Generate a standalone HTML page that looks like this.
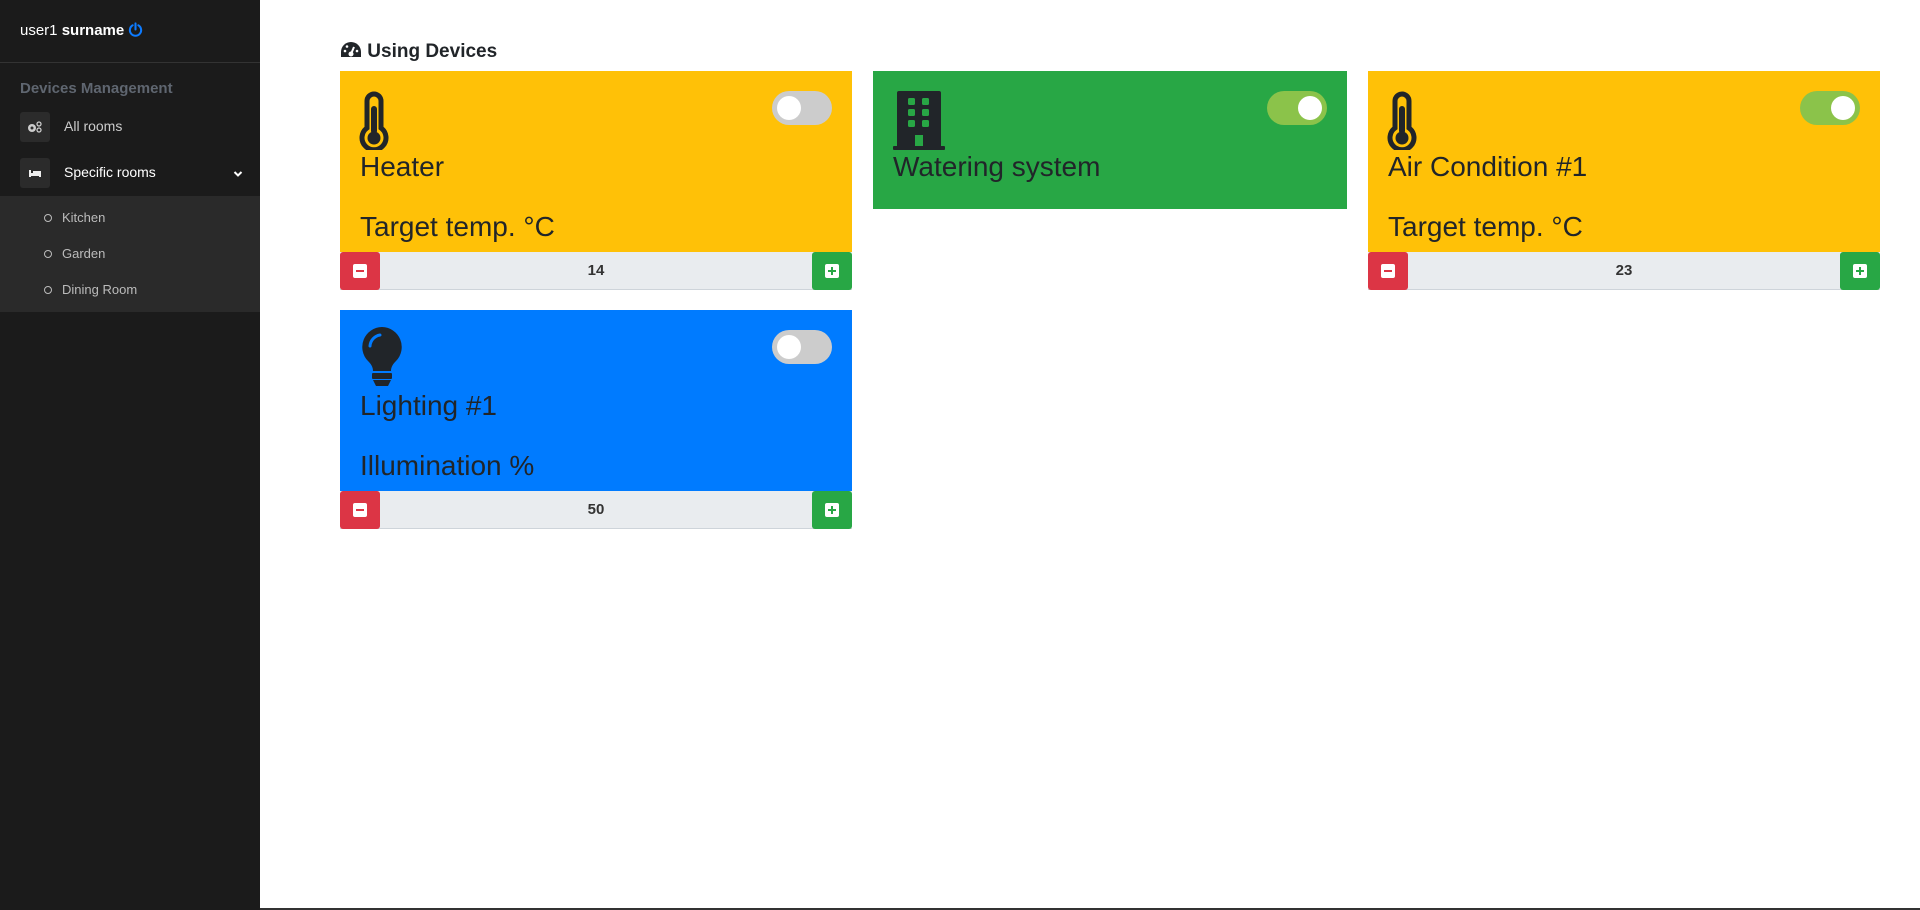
<!DOCTYPE html>
<html><head><meta charset="utf-8"><style>
*{box-sizing:border-box;margin:0;padding:0}
body{width:1920px;height:910px;overflow:hidden;background:#fff;font-family:"Liberation Sans",Arial,sans-serif;position:relative}
.sb{position:absolute;left:0;top:0;width:260px;height:910px;background:#1b1b1b}
.abs{position:absolute}
.card{position:absolute;color:#212529}
.tog{position:absolute;width:60px;height:34px;border-radius:17px;background:#ccc}
.tog i{position:absolute;top:5px;left:5px;width:24px;height:24px;border-radius:50%;background:#fff}
.tog.on{background:#8bc34a}.tog.on i{left:31px}
.name{position:absolute;left:20px;font-size:28px;line-height:32px}
.bar{position:absolute;left:0;right:0;top:181px;height:38px;background:#e9ecef;border-bottom:1px solid #ced4da;text-align:center;font-weight:bold;font-size:15px;line-height:38px;color:#333}
.bm,.bp{position:absolute;top:0;width:40px;height:38px;border-radius:3px}
.bm{left:0;background:#dc3545}.bp{right:0;background:#28a745}
.bm:after,.bp:after{content:"";position:absolute;left:13px;top:12px;width:14px;height:14px;background:#fff;border-radius:2px}
.bm b,.bp b{position:absolute;z-index:2;left:16px;top:18px;width:8px;height:2px;background:#dc3545}
.bp b{background:#28a745}
.bp s{position:absolute;z-index:2;left:19px;top:15px;width:2px;height:8px;background:#28a745}
</style></head><body>
<div class="sb">
 <div class="abs" style="left:20px;top:22px;font-size:15px;color:#fff">user1 <b>surname</b>
  <svg width="15" height="15" viewBox="0 0 16 16" style="vertical-align:-2px"><path d="M5 3.5A6 6 0 1 0 11 3.5" fill="none" stroke="#0d7bff" stroke-width="2.2" stroke-linecap="round"/><path d="M8 1.5V8" stroke="#0d7bff" stroke-width="2.2" stroke-linecap="round"/></svg></div>
 <div class="abs" style="left:0;top:62px;width:260px;height:1px;background:#333"></div>
 <div class="abs" style="left:20px;top:80px;font-size:15px;font-weight:bold;color:#5f6670">Devices Management</div>
 <div class="abs" style="left:20px;top:112px;width:30px;height:30px;background:#2b2b2b;border-radius:3px"><svg width="30" height="30" viewBox="0 0 30 30"><circle cx="12" cy="16" r="4" fill="#ccc"/><circle cx="12" cy="16" r="1.5" fill="#2b2b2b"/><circle cx="19" cy="12" r="2" fill="none" stroke="#ccc" stroke-width="1.3"/><circle cx="19" cy="18" r="2" fill="none" stroke="#ccc" stroke-width="1.3"/></svg></div>
 <div class="abs" style="left:64px;top:118px;font-size:14px;color:#ccc">All rooms</div>
 <div class="abs" style="left:20px;top:158px;width:30px;height:30px;background:#2b2b2b;border-radius:3px"><svg width="30" height="30" viewBox="0 0 30 30"><rect x="9" y="12" width="2" height="7" fill="#eee"/><rect x="9" y="15" width="12" height="3" fill="#eee"/><rect x="13" y="13" width="8" height="3" fill="#eee"/><rect x="19" y="15" width="2" height="4" fill="#eee"/></svg></div>
 <div class="abs" style="left:64px;top:164px;font-size:14px;color:#fff">Specific rooms</div>
 <svg class="abs" style="left:233px;top:170px" width="10" height="8" viewBox="0 0 10 8"><path d="M1.5 2l3.5 3.5L8.5 2" fill="none" stroke="#fff" stroke-width="2"/></svg>
 <div class="abs" style="left:0;top:196px;width:260px;height:116px;background:#2a2a2a"></div>
 <div class="abs" style="left:44px;top:210px;font-size:13px;color:#bbb;line-height:16px">
  <div style="height:36px"><span style="display:inline-block;width:8px;height:8px;border:1.3px solid #bbb;border-radius:50%;margin-right:10px"></span>Kitchen</div>
  <div style="height:36px"><span style="display:inline-block;width:8px;height:8px;border:1.3px solid #bbb;border-radius:50%;margin-right:10px"></span>Garden</div>
  <div style="height:36px"><span style="display:inline-block;width:8px;height:8px;border:1.3px solid #bbb;border-radius:50%;margin-right:10px"></span>Dining Room</div>
 </div>
</div>
<div class="abs" style="left:260px;top:908px;width:1660px;height:2px;background:#333"></div>

<div class="abs" style="left:340px;top:41px;font-size:19px;font-weight:bold;color:#212529">
<svg width="22" height="18" viewBox="0 0 22 18" style="vertical-align:-2px"><path d="M11 1A10 10 0 0 0 1 11v5h20v-5A10 10 0 0 0 11 1z" fill="#212529"/><circle cx="11" cy="13" r="2.5" fill="#fff"/><path d="M11 13l3-7" stroke="#fff" stroke-width="2"/><circle cx="5" cy="10" r="1.3" fill="#fff"/><circle cx="7" cy="5.5" r="1.3" fill="#fff"/><circle cx="17" cy="10" r="1.3" fill="#fff"/></svg> Using Devices</div>

<!-- Heater -->
<div class="card" style="left:340px;top:71px;width:512px;height:219px;background:#ffc107">
 <svg class="abs" style="left:18px;top:20px" width="32" height="59" viewBox="0 0 32 59"><path d="M16 3a7 7 0 0 0-7 7v27a12 12 0 1 0 14 0V10a7 7 0 0 0-7-7z" fill="none" stroke="#212529" stroke-width="5"/><rect x="13" y="15" width="6" height="28" rx="3" fill="#212529"/><circle cx="16" cy="47" r="6.5" fill="#212529"/></svg>
 <div class="tog" style="left:432px;top:20px"><i></i></div>
 <div class="name" style="top:80px">Heater</div>
 <div class="name" style="top:140px">Target temp. °C</div>
 <div class="bar"><div class="bm"><b></b></div>14<div class="bp"><b></b><s></s></div></div>
</div>
<!-- Watering -->
<div class="card" style="left:873px;top:71px;width:474px;height:138px;background:#28a745">
 <svg class="abs" style="left:20px;top:20px" width="52" height="59" viewBox="0 0 52 59"><rect x="4" y="0" width="44" height="57" rx="2" fill="#212529"/><rect x="0" y="55" width="52" height="4" rx="1" fill="#212529"/><g fill="#28a745"><rect x="15" y="7" width="7" height="7" rx="1.5"/><rect x="29" y="7" width="7" height="7" rx="1.5"/><rect x="15" y="18" width="7" height="7" rx="1.5"/><rect x="29" y="18" width="7" height="7" rx="1.5"/><rect x="15" y="29" width="7" height="7" rx="1.5"/><rect x="29" y="29" width="7" height="7" rx="1.5"/><rect x="22" y="44" width="8" height="11"/></g></svg>
 <div class="tog on" style="left:394px;top:20px"><i></i></div>
 <div class="name" style="top:80px">Watering system</div>
</div>
<!-- AC -->
<div class="card" style="left:1368px;top:71px;width:512px;height:219px;background:#ffc107">
 <svg class="abs" style="left:18px;top:20px" width="32" height="59" viewBox="0 0 32 59"><path d="M16 3a7 7 0 0 0-7 7v27a12 12 0 1 0 14 0V10a7 7 0 0 0-7-7z" fill="none" stroke="#212529" stroke-width="5"/><rect x="13" y="15" width="6" height="28" rx="3" fill="#212529"/><circle cx="16" cy="47" r="6.5" fill="#212529"/></svg>
 <div class="tog on" style="left:432px;top:20px"><i></i></div>
 <div class="name" style="top:80px">Air Condition #1</div>
 <div class="name" style="top:140px">Target temp. °C</div>
 <div class="bar"><div class="bm"><b></b></div>23<div class="bp"><b></b><s></s></div></div>
</div>
<!-- Lighting -->
<div class="card" style="left:340px;top:310px;width:512px;height:219px;background:#007bff">
 <svg class="abs" style="left:20px;top:15px" width="44" height="63" viewBox="0 0 44 63"><path d="M22 2A20 20 0 0 0 8 36c3 3 5 6 5 10h18c0-4 2-7 5-10A20 20 0 0 0 22 2z" fill="#212529"/><path d="M10 21a12 12 0 0 1 10-11" fill="none" stroke="#007bff" stroke-width="3" stroke-linecap="round"/><rect x="12" y="48" width="20" height="6" rx="1" fill="#212529"/><path d="M13 55h18l-3 6h-12z" fill="#212529"/></svg>
 <div class="tog" style="left:432px;top:20px"><i></i></div>
 <div class="name" style="top:80px">Lighting #1</div>
 <div class="name" style="top:140px">Illumination %</div>
 <div class="bar"><div class="bm"><b></b></div>50<div class="bp"><b></b><s></s></div></div>
</div>
</body></html>
